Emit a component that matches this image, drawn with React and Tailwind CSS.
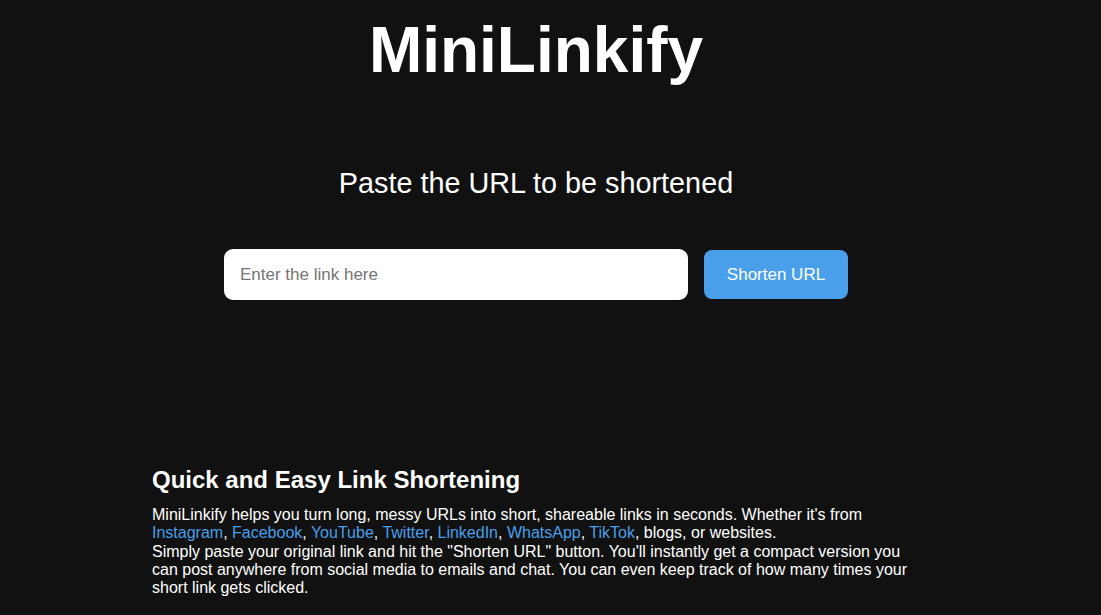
import React, { useState } from 'react';

const socials = ['Instagram', 'Facebook', 'YouTube', 'Twitter', 'LinkedIn', 'WhatsApp', 'TikTok'];

const App = () => {
  // State for the link typed in the input
  const [url, setUrl] = useState('');

  return (
    <div className="min-h-screen bg-[#111111] text-white font-['Liberation_Sans',Arial,sans-serif]">
      <div className="w-[1072px] flex flex-col items-center pt-[13px]">
        {/* Title */}
        <h1 className="text-[64px] leading-[74px] font-bold">MiniLinkify</h1>

        {/* Prompt */}
        <h2 className="mt-[80px] text-[28.8px] leading-[33px]">Paste the URL to be shortened</h2>

        {/* Input and button */}
        <div className="mt-[49px] flex items-center gap-4">
          <input
            type="text"
            value={url}
            onChange={(e) => setUrl(e.target.value)}
            placeholder="Enter the link here"
            className="w-[464px] h-[51px] rounded-[9px] bg-white px-4 text-[17px] text-black placeholder:text-[#757575] outline-none"
          />
          <button className="w-[144px] h-[49px] rounded-[8px] bg-[#4a9fea] text-[17px] text-white">
            Shorten URL
          </button>
        </div>

        {/* Info section */}
        <div className="w-[768px] mt-[166px]">
          <h3 className="text-[24px] leading-[28px] font-bold">Quick and Easy Link Shortening</h3>
          <p className="mt-[12px] text-[16px] leading-[18.3px]">
            MiniLinkify helps you turn long, messy URLs into short, shareable links in seconds. Whether it's from{' '}
            {socials.map((name, i) => (
              <React.Fragment key={name}>
                <a href="#" className="text-[#4a9fea]">{name}</a>
                {i < socials.length - 1 ? ', ' : ''}
              </React.Fragment>
            ))}
            , blogs, or websites.
            <br />
            Simply paste your original link and hit the "Shorten URL" button. You'll instantly get a compact version you can post anywhere from social media to emails and chat. You can even keep track of how many times your short link gets clicked.
          </p>
        </div>
      </div>
    </div>
  );
};

export default App;
